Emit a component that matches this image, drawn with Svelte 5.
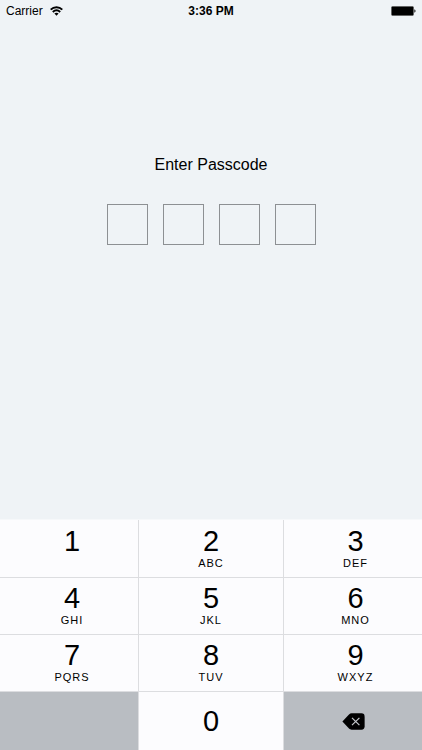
<script lang="ts">
  const keys = [
    { digit: '1', letters: '' },
    { digit: '2', letters: 'ABC' },
    { digit: '3', letters: 'DEF' },
    { digit: '4', letters: 'GHI' },
    { digit: '5', letters: 'JKL' },
    { digit: '6', letters: 'MNO' },
    { digit: '7', letters: 'PQRS' },
    { digit: '8', letters: 'TUV' },
    { digit: '9', letters: 'WXYZ' },
  ];

  const length = 4;
  let passcode: string = $state('');

  function press(digit: string) {
    if (passcode.length < length) passcode += digit;
  }

  function remove() {
    passcode = passcode.slice(0, -1);
  }
</script>

<svelte:head><title>Enter Passcode</title></svelte:head>

<div class="screen">
  <header class="status">
    <div class="carrier">
      <span>Carrier</span>
      <svg width="13" height="10" viewBox="0 0 13 10" fill="none" stroke="#000" stroke-width="2">
        <path d="M0.7 3.6C4 0.4 9 0.4 12.3 3.6" />
        <path d="M2.8 6C5 4 8 4 10.2 6" />
        <path d="M4.4 7.6C5.6 6.6 7.4 6.6 8.6 7.6L6.5 9.8Z" fill="#000" stroke="none" />
      </svg>
    </div>
    <time>3:36 PM</time>
    <svg class="battery" width="25" height="10" viewBox="0 0 25 10">
      <rect x="0.5" y="0.5" width="22" height="9" rx="1" fill="#000" stroke="#555" stroke-width="0.6" />
      <path d="M23.4 3.3C24.9 3.7 24.9 6.3 23.4 6.7Z" fill="#000" />
    </svg>
  </header>

  <main>
    <h1 id="title">Enter Passcode</h1>
    <div class="boxes" role="group" aria-labelledby="title">
      {#each Array(length) as _, i}
        <input type="password" readonly aria-label={`Digit ${i + 1}`} value={passcode[i] ?? ''} />
      {/each}
    </div>
  </main>

  <div class="keypad">
    {#each keys as key}
      <button class="key" onclick={() => press(key.digit)}>
        <span class="digit">{key.digit}</span>
        <span class="letters">{key.letters}</span>
      </button>
    {/each}
    <div class="blank"></div>
    <button class="key zero" onclick={() => press('0')}>
      <span class="digit">0</span>
    </button>
    <button class="delete" aria-label="Delete" onclick={remove}>
      <svg width="23" height="17" viewBox="0 0 23 17">
        <path d="M0.4 8.5L7 1.4C7.8 0.6 8.6 0.3 9.6 0.3H19.5C21.5 0.3 22.6 1.4 22.6 3.4V13.6C22.6 15.6 21.5 16.7 19.5 16.7H9.6C8.6 16.7 7.8 16.4 7 15.6Z" fill="#000" />
        <path d="M10 4.8L17.4 12.2M17.4 4.8L10 12.2" stroke="#c3c6ca" stroke-width="1.2" />
      </svg>
    </button>
  </div>
</div>

<style>
  :global(body) {
    background: #eff3f6;
  }

  .screen {
    display: flex;
    flex-direction: column;
    min-height: 100vh;
    font-family: 'Liberation Sans', Arial, sans-serif;
    color: #000;
  }

  .status {
    display: grid;
    grid-template-columns: 1fr auto 1fr;
    align-items: center;
    height: 22px;
    padding: 0 6px;
    font-size: 12px;
  }

  .carrier {
    display: flex;
    align-items: center;
    gap: 7px;
  }

  time {
    font-weight: bold;
  }

  .battery {
    justify-self: end;
  }

  main {
    flex: 1;
    display: flex;
    flex-direction: column;
    align-items: center;
    padding-top: 133px;
  }

  h1 {
    margin: 0 0 29px;
    font-size: 16px;
    font-weight: normal;
    line-height: 20px;
  }

  .boxes {
    display: flex;
    gap: 15px;
  }

  input {
    box-sizing: border-box;
    width: 41px;
    height: 41px;
    padding: 0;
    border: 1px solid #8d9093;
    border-radius: 0;
    background: transparent;
    font-size: 24px;
    text-align: center;
    outline: none;
  }

  .keypad {
    display: grid;
    grid-template-columns: 138fr 144fr 138fr;
    grid-template-rows: 57px 56px 56px 58px;
    gap: 1px;
    background: #dcdde0;
    border-top: 1px solid #f6f8fa;
  }

  button {
    margin: 0;
    padding: 0;
    border: 0;
    border-radius: 0;
    color: inherit;
    font-family: inherit;
    cursor: pointer;
  }

  .key {
    display: flex;
    flex-direction: column;
    align-items: center;
    justify-content: flex-end;
    padding-bottom: 7px;
    background: #fcfcfe;
  }

  .key:nth-child(3n + 1) {
    padding-left: 6px;
  }

  .key:nth-child(3n) {
    padding-left: 5px;
  }

  .key.zero {
    justify-content: center;
    padding: 0;
  }

  .digit {
    font-size: 29px;
    line-height: 30px;
  }

  .letters {
    height: 14px;
    font-size: 11px;
    line-height: 14px;
    letter-spacing: 1px;
  }

  .blank,
  .delete {
    background: #b9bdc2;
  }

  .delete {
    display: flex;
    align-items: center;
    justify-content: center;
  }
</style>
